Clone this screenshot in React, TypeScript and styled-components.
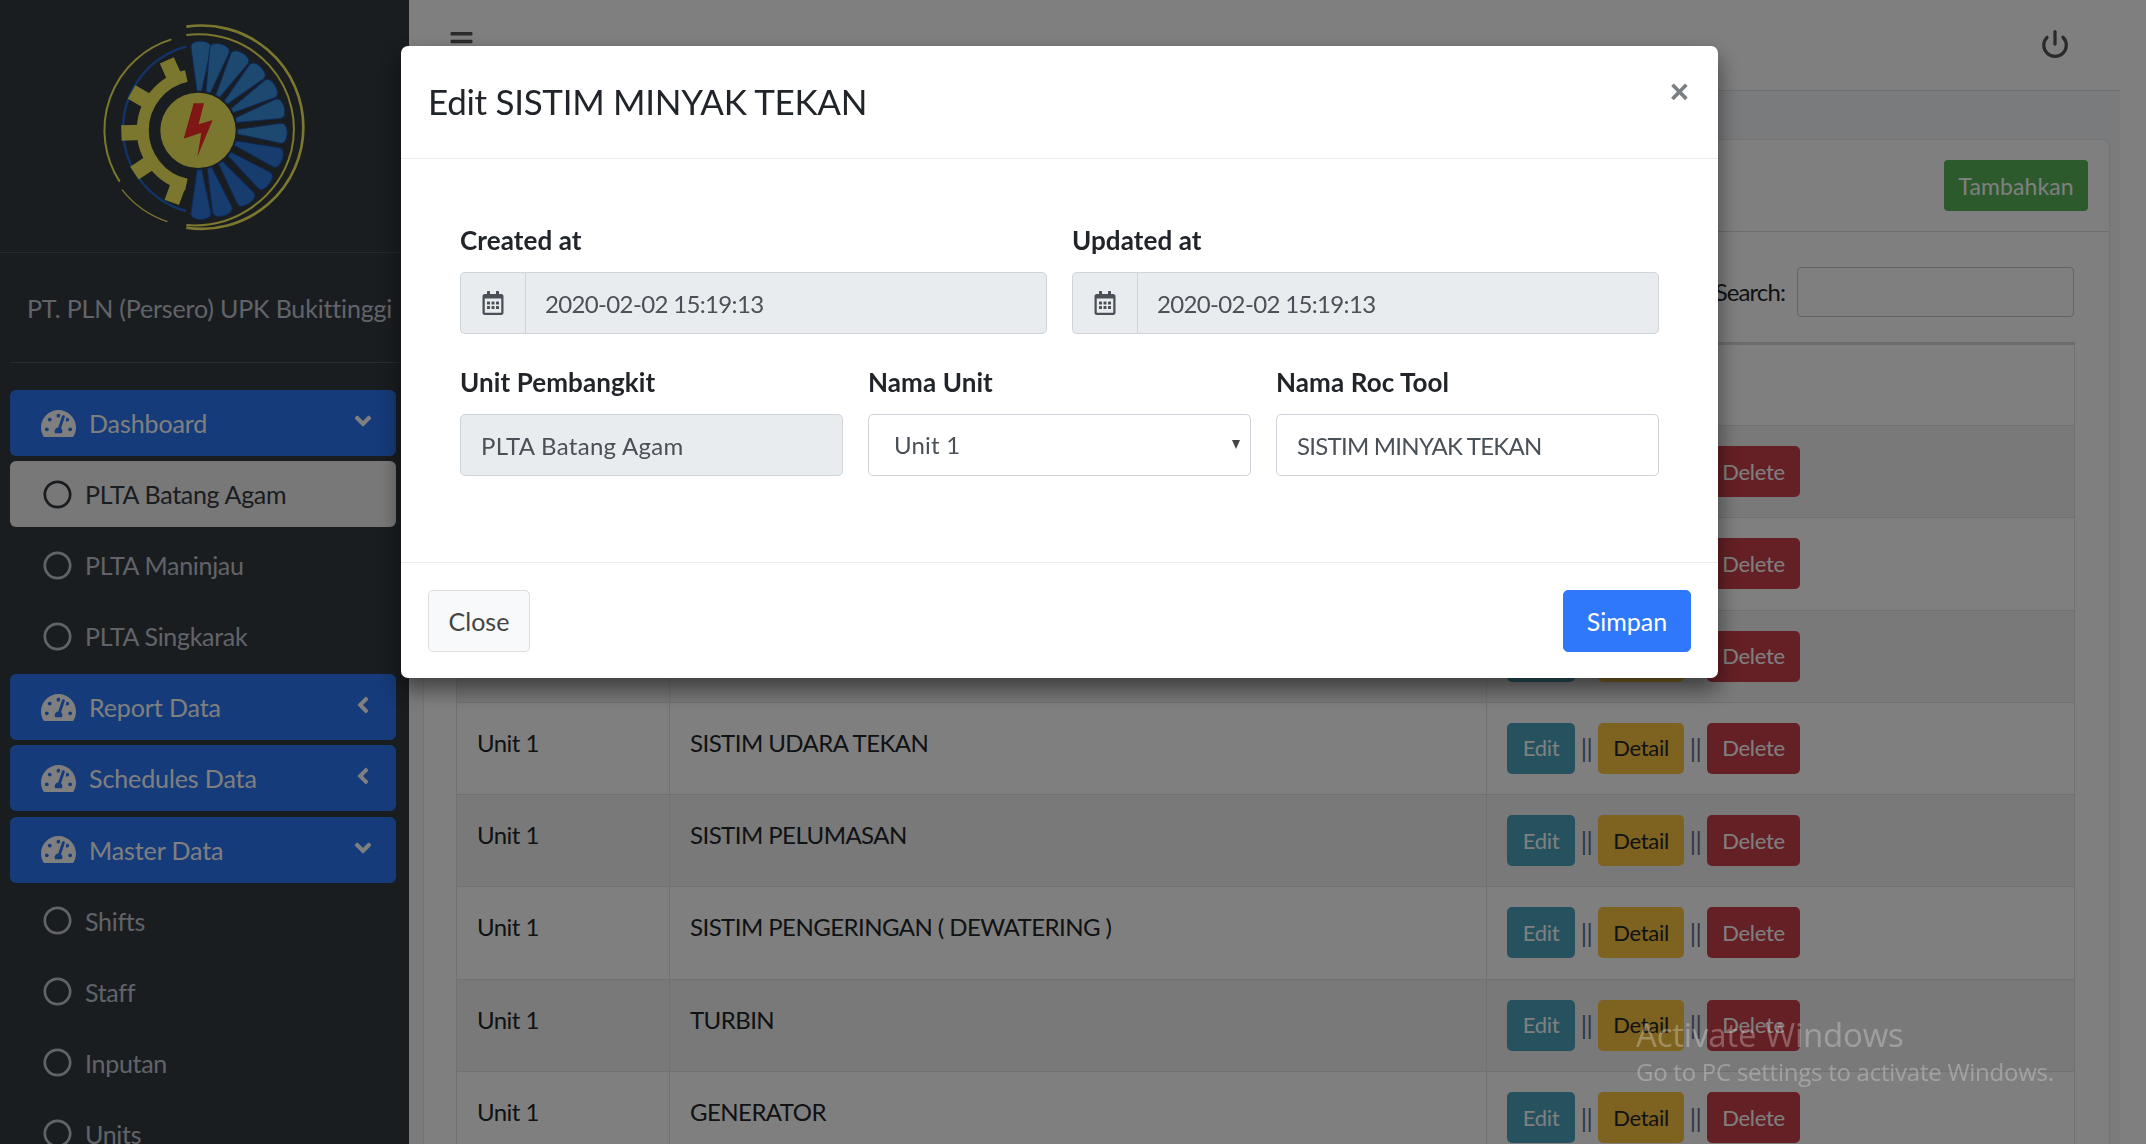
import React from "react";
import styled, { createGlobalStyle } from "styled-components";
import { FaTachometerAlt, FaAngleDown, FaAngleLeft, FaRegCircle, FaRegCalendarAlt, FaBars } from "react-icons/fa";
import { Power } from "lucide-react";

const Global = createGlobalStyle`
  * { box-sizing: border-box; }
  html, body { margin: 0; height: 100%; overflow: hidden; background: #fff; }
  body { font-family: "Lato", "Noto Sans", sans-serif; font-size: 24px; line-height: 36px; color: #212529; }
`;

const Shell = styled.div`
  display: flex; height: 1144px; overflow: hidden; padding-right: 26px;
`;
const Sidebar = styled.aside`
  width: 409px; flex: none; background: #343a40; overflow: hidden; display: flex; flex-direction: column;
`;
const Brand = styled.div`
  height: 253px; flex: none; border-bottom: 1px solid #4b545c; display: flex; justify-content: center; padding: 11px 3px 0 0;
`;
const UserPanel = styled.div`
  margin: 0 10px; height: 110px; flex: none; border-bottom: 1px solid #4f5962; color: #c2c7d0;
  display: flex; align-items: center; padding-left: 17px; white-space: nowrap; font-size: 25px; letter-spacing: -0.17px;
`;
const Nav = styled.nav`
  display: flex; flex-direction: column; gap: 5.1px; padding: 27px 13px 0 10px;
`;
const NavItem = styled.div<{ $kind: "parent" | "active" | "child" }>`
  height: 66px; flex: none; border-radius: 6px; display: flex; align-items: center; position: relative;
  font-size: 25px; letter-spacing: ${(p) => (p.$kind === "parent" ? "-0.1px" : "-0.3px")};
  padding-left: ${(p) => (p.$kind === "parent" ? "31px" : "33px")};
  gap: ${(p) => (p.$kind === "parent" ? "13px" : "13px")};
  background: ${(p) => (p.$kind === "parent" ? "#2d76f4" : p.$kind === "active" ? "#f0f0f0" : "transparent")};
  color: ${(p) => (p.$kind === "parent" ? "#fff" : p.$kind === "active" ? "#343a40" : "#c2c7d0")};
  svg.lead { flex: none; }
  svg.caret { position: absolute; right: 20px; top: 50%; transform: translateY(-50%) translateY(-2px); }
`;

const Main = styled.main`
  flex: 1; min-width: 0; display: flex; flex-direction: column;
`;
const TopBar = styled.header`
  height: 91px; flex: none; background: #fff; border-bottom: 1px solid #dee2e6; display: flex; justify-content: space-between; padding: 29px 50px 0 40px; color: #555;
`;
const Content = styled.div`
  flex: 1; background: #f4f6f9; padding: 49px 11px 0 15px; overflow: hidden;
`;
const Card = styled.section`
  background: #fff; border-radius: 6px; box-shadow: 0 0 2px rgba(0,0,0,.2);
`;
const CardHead = styled.div`
  height: 92px; border-bottom: 1px solid #dcdcdc; display: flex; justify-content: flex-end; align-items: center; padding-right: 21px;
`;
const AddButton = styled.button`
  height: 51px; width: 144px; border: 0; border-radius: 4px; background: #58b45a; color: #fff; font: inherit; font-size: 23px; letter-spacing: 0.1px; padding: 0;
`;
const CardBody = styled.div`
  padding: 35px 35px 0 32px;
`;
const SearchRow = styled.div`
  display: flex; justify-content: flex-end; align-items: center; gap: 12px; margin-bottom: 25px;
`;
const SearchLabel = styled.span`
  letter-spacing: -0.9px;
`;
const SearchInput = styled.input`
  width: 277px; height: 50px; border: 1px solid #c4c8cc; border-radius: 4px; background: #fff;
`;
const Table = styled.table`
  width: 1618px; table-layout: fixed; border-collapse: collapse; border: 1px solid #dee2e6;
  border-top: 3px solid #d5d8dc;
`;
const Row = styled.tr<{ $striped?: boolean }>`
  background: ${(p) => (p.$striped ? "rgba(0,0,0,.05)" : "transparent")};
`;
const HeadCell = styled.th`
  height: 82px; border: 1px solid #dee2e6; text-align: left; padding: 0 22px;
`;
const Cell = styled.td`
  height: 92.3px; border: 1px solid #dee2e6; padding: 20px 20px 20px 20px; vertical-align: top; letter-spacing: -0.55px; color: #212529; line-height: 40px;
`;
const Actions = styled.div`
  display: flex; align-items: center;
`;
const ActionButton = styled.button<{ $tone: "edit" | "detail" | "delete"; $w: number }>`
  height: 51px; width: ${(p) => p.$w}px; border: 0; border-radius: 5px; font: inherit; font-size: 22px; letter-spacing: -0.3px; padding: 0;
  background: ${(p) => (p.$tone === "edit" ? "#4aa5bc" : p.$tone === "detail" ? "#fac440" : "#ca404a")};
  color: ${(p) => (p.$tone === "detail" ? "#212529" : "#fff")};
`;
const Sep = styled.span`
  width: 23px; text-align: center; font-size: 25px; color: #5a6a90;
`;

const Backdrop = styled.div`
  position: fixed; inset: 0; background: rgba(0,0,0,.5); z-index: 10;
`;
const Modal = styled.div`
  position: fixed; z-index: 20; left: 401px; top: 46px; width: 1317px; height: 632px; background: #fff; border-radius: 7px;
  box-shadow: 0 11px 22px rgba(0,0,0,.5); display: flex; flex-direction: column;
`;
const ModalHead = styled.div`
  height: 113px; flex: none; border-bottom: 1px solid #e9ecef; padding: 0 27px; position: relative; display: flex; align-items: center;
`;
const ModalTitle = styled.h4`
  margin: 0 0 3px; font-size: 35px; font-weight: 400; letter-spacing: -0.3px; line-height: 48px;
`;
const CloseX = styled.button`
  position: absolute; right: 29px; top: 24px; border: 0; background: none; padding: 0; font: 700 33px/44px "Liberation Sans", sans-serif; color: #7b7f84;
`;
const ModalBody = styled.div`
  flex: 1; padding: 63px 59px 0 59px; display: flex; flex-direction: column; gap: 30px;
`;
const FormRow = styled.div`
  display: flex; gap: 25px;
`;
const Field = styled.div`
  flex: 1 1 0; min-width: 0; display: flex; flex-direction: column;
`;
const Label = styled.label`
  font-weight: 700; font-size: 26px; line-height: 36px; margin-bottom: 14px; letter-spacing: 0.1px; color: #212529;
`;
const InputGroup = styled.div`
  display: flex; height: 62px;
`;
const Addon = styled.span`
  width: 65px; flex: none; display: flex; align-items: center; justify-content: center; background: #e9ecef; color: #495057;
  border: 1px solid #ced4da; border-right: 0; border-radius: 5px 0 0 5px;
`;
const Control = styled.input<{ $joined?: boolean; $track: number }>`
  flex: 1; width: 100%; min-width: 0; height: 62px; border: 1px solid #ced4da; font: inherit; color: #495057; letter-spacing: ${(p) => p.$track}px;
  padding: 0 ${(p) => (p.$joined ? "19px" : "20px")};
  border-radius: ${(p) => (p.$joined ? "0 5px 5px 0" : "5px")};
  background: ${(p) => (p.readOnly ? "#e9ecef" : "#fff")};
`;
const SelectWrap = styled.div`
  position: relative; height: 62px;
`;
const SelectBox = styled.select`
  appearance: none; width: 100%; height: 62px; border: 1px solid #ced4da; border-radius: 5px; background: #fff; font: inherit; color: #495057; padding: 0 25px; letter-spacing: 0.2px;
`;
const SelectArrow = styled.span`
  position: absolute; right: 11px; top: 26px; width: 0; height: 0; border-left: 4.5px solid transparent; border-right: 4.5px solid transparent; border-top: 9px solid #444;
  pointer-events: none;
`;
const ModalFoot = styled.div`
  height: 116px; flex: none; border-top: 1px solid #e9ecef; display: flex; justify-content: space-between; align-items: center; padding: 0 27px 0 27px;
`;
const FootButton = styled.button<{ $primary?: boolean }>`
  height: 62px; width: ${(p) => (p.$primary ? "128px" : "102px")}; border-radius: 5px; font: inherit; font-size: 25px; letter-spacing: 0; padding: 0;
  border: 1px solid ${(p) => (p.$primary ? "#2f78fb" : "#ddd")};
  background: ${(p) => (p.$primary ? "#2f78fb" : "#f8f9fa")};
  color: ${(p) => (p.$primary ? "#fff" : "#444")};
`;
const Watermark = styled.div`
  position: fixed; z-index: 30; left: 1636px; top: 1013px; color: rgba(255,255,255,.28); font-family: "Open Sans", sans-serif; pointer-events: none;
`;
const WatermarkTitle = styled.div`
  font-size: 33px; line-height: 44px; letter-spacing: -0.2px;
`;
const WatermarkSub = styled.div`
  font-size: 24px; line-height: 30px; letter-spacing: -0.25px;
`;

const bladeAngles = [2, 15, 30, 45, 60, 75, 92, 109, 127, 145, 163, 178];
const Logo = () => (
  <svg width="250" height="240" viewBox="0 0 750 720" aria-hidden="true">
    <path d="M325 47 A305 305 0 1 1 325 650" fill="none" stroke="#f7ef5c" strokeWidth="8" />
    <path d="M325 72 A285 285 0 0 1 640 420 A300 300 0 0 1 325 642" fill="none" stroke="#f7ef5c" strokeWidth="6" />
    <path d="M325 107 A255 255 0 0 0 325 600" fill="none" stroke="#2368d0" strokeWidth="7" />
    <path d="M280 85 A285 285 0 0 0 125 512" fill="none" stroke="#f7ef5c" strokeWidth="6" />
    <path d="M132 536 A290 290 0 0 0 268 632" fill="none" stroke="#f7ef5c" strokeWidth="4" />
    <path d="M325 195 A167 167 0 0 0 325 521" fill="none" stroke="#f7ef5c" strokeWidth="36" />
    {[-24, -60, -92, -124, -160].map((a) => (
      <rect key={a} x="337" y="128" width="46" height="60" fill="#f7ef5c" transform={`rotate(${a} 360 358)`} />
    ))}
    {bladeAngles.map((a) => (
      <path
        key={a}
        d="M353 240 L367 240 L390 110 Q392 92 360 90 Q328 92 330 110 Z"
        fill={a > 100 ? "#2e78dc" : "#3a90e0"}
        stroke="#1e50a8"
        strokeWidth="3"
        transform={`rotate(${a} 360 358)`}
      />
    ))}
    <circle cx="360" cy="358" r="113" fill="#f7ef5c" />
    <polygon points="347,277 378,277 362,340 404,327 358,437 370,365 317,383" fill="#ff3028" />
  </svg>
);

const Gauge = () => <FaTachometerAlt className="lead" size={35} />;
const Ring = () => <FaRegCircle className="lead" size={29} />;

const rows: [string, string][] = [
  ["Unit 1", "SISTIM MINYAK TEKAN"],
  ["Unit 1", "SISTIM PENDINGIN"],
  ["Unit 1", "SISTIM KELISTRIKAN"],
  ["Unit 1", "SISTIM UDARA TEKAN"],
  ["Unit 1", "SISTIM PELUMASAN"],
  ["Unit 1", "SISTIM PENGERINGAN ( DEWATERING )"],
  ["Unit 1", "TURBIN"],
  ["Unit 1", "GENERATOR"],
];

const parents = (label: string, open: boolean) => (
  <NavItem $kind="parent" key={label}>
    <Gauge />
    {label}
    {open ? <FaAngleDown className="caret" size={26} /> : <FaAngleLeft className="caret" size={26} />}
  </NavItem>
);
const child = (label: string, active = false) => (
  <NavItem $kind={active ? "active" : "child"} key={label}>
    <Ring />
    {label}
  </NavItem>
);

export default function App() {
  return (
    <>
      <Global />
      <Shell>
        <Sidebar>
          <Brand>
            <Logo />
          </Brand>
          <UserPanel>PT. PLN (Persero) UPK Bukittinggi</UserPanel>
          <Nav>
            {parents("Dashboard", true)}
            {child("PLTA Batang Agam", true)}
            {child("PLTA Maninjau")}
            {child("PLTA Singkarak")}
            {parents("Report Data", false)}
            {parents("Schedules Data", false)}
            {parents("Master Data", true)}
            {child("Shifts")}
            {child("Staff")}
            {child("Inputan")}
            {child("Units")}
          </Nav>
        </Sidebar>
        <Main>
          <TopBar>
            <FaBars size={25} />
            <Power size={30} strokeWidth={2.6} />
          </TopBar>
          <Content>
            <Card>
              <CardHead>
                <AddButton>Tambahkan</AddButton>
              </CardHead>
              <CardBody>
                <SearchRow>
                  <SearchLabel>Search:</SearchLabel>
                  <SearchInput />
                </SearchRow>
                <Table>
                  <colgroup>
                    <col width="213" />
                    <col width="817" />
                    <col width="588" />
                  </colgroup>
                  <thead>
                    <tr>
                      <HeadCell>Unit</HeadCell>
                      <HeadCell>Nama Roc Tool</HeadCell>
                      <HeadCell>Action</HeadCell>
                    </tr>
                  </thead>
                  <tbody>
                    {rows.map(([u, n], i) => (
                      <Row key={n} $striped={i % 2 === 0}>
                        <Cell>{u}</Cell>
                        <Cell>{n}</Cell>
                        <Cell>
                          <Actions>
                            <ActionButton $tone="edit" $w={68}>Edit</ActionButton>
                            <Sep>||</Sep>
                            <ActionButton $tone="detail" $w={86}>Detail</ActionButton>
                            <Sep>||</Sep>
                            <ActionButton $tone="delete" $w={93}>Delete</ActionButton>
                          </Actions>
                        </Cell>
                      </Row>
                    ))}
                  </tbody>
                </Table>
              </CardBody>
            </Card>
          </Content>
        </Main>
      </Shell>
      <Backdrop />
      <Modal>
        <ModalHead>
          <ModalTitle>Edit SISTIM MINYAK TEKAN</ModalTitle>
          <CloseX>×</CloseX>
        </ModalHead>
        <ModalBody>
          <FormRow>
            <Field>
              <Label>Created at</Label>
              <InputGroup>
                <Addon><FaRegCalendarAlt size={24} /></Addon>
                <Control $joined $track={-0.65} readOnly value="2020-02-02 15:19:13" />
              </InputGroup>
            </Field>
            <Field>
              <Label>Updated at</Label>
              <InputGroup>
                <Addon><FaRegCalendarAlt size={24} /></Addon>
                <Control $joined $track={-0.65} readOnly value="2020-02-02 15:19:13" />
              </InputGroup>
            </Field>
          </FormRow>
          <FormRow>
            <Field>
              <Label>Unit Pembangkit</Label>
              <Control $track={0.3} readOnly value="PLTA Batang Agam" />
            </Field>
            <Field>
              <Label>Nama Unit</Label>
              <SelectWrap>
                <SelectBox defaultValue="Unit 1">
                  <option>Unit 1</option>
                  <option>Unit 2</option>
                </SelectBox>
                <SelectArrow />
              </SelectWrap>
            </Field>
            <Field>
              <Label>Nama Roc Tool</Label>
              <Control $track={-0.75} value="SISTIM MINYAK TEKAN" onChange={() => {}} />
            </Field>
          </FormRow>
        </ModalBody>
        <ModalFoot>
          <FootButton>Close</FootButton>
          <FootButton $primary>Simpan</FootButton>
        </ModalFoot>
      </Modal>
      <Watermark>
        <WatermarkTitle>Activate Windows</WatermarkTitle>
        <WatermarkSub>Go to PC settings to activate Windows.</WatermarkSub>
      </Watermark>
    </>
  );
}
